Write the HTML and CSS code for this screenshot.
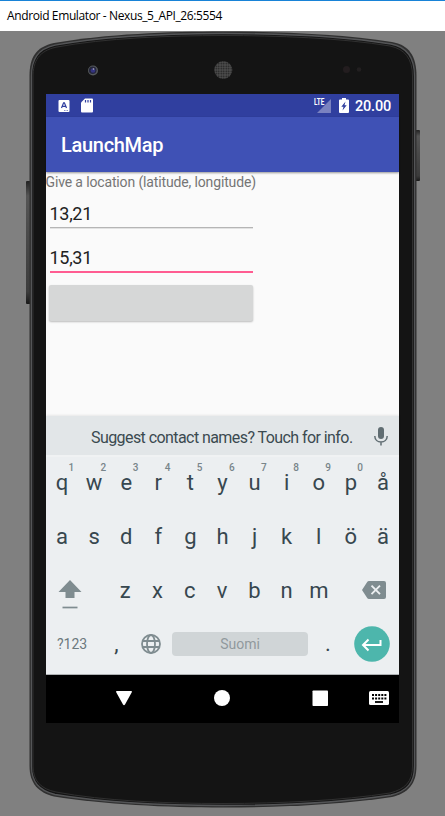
FILE: index.html
```html
<!DOCTYPE html>
<html lang="en">
<head>
<meta charset="utf-8">
<title>Android Emulator - Nexus_5_API_26:5554</title>
<link rel="stylesheet" href="styles.css">
</head>
<body>
<header class="titlebar"><span>Android Emulator - Nexus_5_API_26:5554</span></header>
<main class="device">
  <svg class="shell" width="445" height="785" viewBox="0 31 445 785" aria-hidden="true">
    <defs>
      <linearGradient id="btn" x1="0" y1="0" x2="0" y2="1"><stop offset="0" stop-color="#222"/><stop offset=".12" stop-color="#555"/><stop offset=".5" stop-color="#484848"/><stop offset=".9" stop-color="#3c3c3c"/><stop offset="1" stop-color="#181818"/></linearGradient>
      <pattern id="mesh" width="2.500" height="2.500" patternUnits="userSpaceOnUse"><rect width="2.500" height="2.500" fill="#5c5c5c"/><rect x=".4" y=".4" width="1.700" height="1.700" fill="#1d1d1d"/></pattern>
    </defs>
    <rect x="26" y="181" width="5" height="123" rx="1" fill="url(#btn)"/>
    <rect x="415" y="130" width="5" height="51" rx="1" fill="url(#btn)"/>
    <path d="M29.500 76C29.500 57 36 47 54 43C105 34 170 31.500 223 31.500C276 31.500 342 34 392 42C409 45 416.500 56 416.500 76V766C416.500 784 408 793 392 797C342 804.500 280 807.500 223 807.500C166 807.500 104 804.500 54 796.500C38 792.500 29.500 783 29.500 766Z" fill="#303030"/>
    <path d="M31.500 76C31.500 59 38 49 55 45.200C105 36 170 33.500 223 33.500C276 33.500 342 36 391 44C407 47 414.500 58 414.500 76V766C414.500 783 407 791 391 795C342 802.500 280 805.500 223 805.500C166 805.500 104 802.500 55 794.500C39 790.500 31.500 782 31.500 766Z" fill="#141414" stroke="#545557" stroke-width="1.300"/>
    <path d="M33 77C33 61 39 51 56 47.200C105 38 170 35.500 223 35.500C276 35.500 342 38 390 46C405 49 412.500 59 412.500 76V766C412.500 782 405 789 390 793C342 800.500 280 803.500 223 803.500C166 803.500 104 801 56 792C41 789 33 781 33 766Z" fill="#141414" stroke="#303030"/>
    <circle cx="93" cy="70.500" r="5" fill="#55595b"/><circle cx="92.700" cy="70.300" r="3.800" fill="#25263b"/><circle cx="93" cy="70.500" r="2.300" fill="#343480"/><circle cx="93.500" cy="69" r=".8" fill="#bbb"/>
    <circle cx="223.300" cy="70" r="9" fill="url(#mesh)"/>
    <circle cx="346.500" cy="69.500" r="3.500" fill="#231d1f"/><circle cx="359" cy="69.500" r="2.300" fill="#221f20"/>
  </svg>
  <section class="screen">
    <div class="status">
      <svg width="12" height="14" viewBox="0 0 12 14"><rect x=".5" y="1" width="11" height="12" rx="1" fill="#fff"/><path d="M3.500 9L5.600 3.800H6.400L8.500 9M4.300 7.300H7.700" fill="none" stroke="#303f9f" stroke-width="1.200"/><path d="M6 11.500H10" stroke="#8a92c9" stroke-dasharray="1 .5"/></svg>
      <svg class="sd" width="12" height="15" viewBox="0 0 12 15"><path d="M4 .5H11Q12 .5 12 1.500V13.500Q12 14.500 11 14.500H1Q0 14.500 0 13.500V4.500Z" fill="#fff"/><path d="M4.500 2V4.600M7 2V4.600M9.500 2V4.600" stroke="#303f9f" stroke-width="1.200"/></svg>
      <span class="lte"><span>LTE</span></span>
      <svg class="signal" width="14" height="14" viewBox="0 0 14 14"><path d="M14 0V14H0Z" fill="#7a82c0"/></svg>
      <svg class="battery" width="10" height="15" viewBox="0 0 10 15"><path d="M3 0H7V1.500H9Q10 1.500 10 2.500V14Q10 15 9 15H1Q0 15 0 14V2.500Q0 1.500 1 1.500H3Z" fill="#fff"/><path d="M6.500 3.500L2.300 8.800H4.500L3.500 12.500L7.700 7.300H5.500Z" fill="#303f9f"/></svg>
      <span class="clock">20.00</span>
    </div>
    <div class="appbar"><h1>LaunchMap</h1></div>
    <div class="content">
      <p class="label">Give a location (latitude, longitude)</p>
      <div class="field"><span>13,21</span></div>
      <div class="field focused"><span>15,31</span></div>
      <div class="button"></div>
    </div>
    <div class="suggest">
      <span>Suggest contact names? Touch for info.</span>
      <svg width="14" height="20" viewBox="0 0 14 20"><rect x="4" y="0" width="6" height="12" rx="3" fill="#606d72"/><path d="M.8 9C.8 17 13.200 17 13.200 9M7 15V18.500" fill="none" stroke="#606d72" stroke-width="1.500"/></svg>
    </div>
    <div class="keyboard">
      <div class="row first"><b>q<sup>1</sup></b><b>w<sup>2</sup></b><b>e<sup>3</sup></b><b>r<sup>4</sup></b><b>t<sup>5</sup></b><b>y<sup>6</sup></b><b>u<sup>7</sup></b><b>i<sup>8</sup></b><b>o<sup>9</sup></b><b>p<sup>0</sup></b><b>å</b></div>
      <div class="row"><b>a</b><b>s</b><b>d</b><b>f</b><b>g</b><b>h</b><b>j</b><b>k</b><b>l</b><b>ö</b><b>ä</b></div>
      <div class="row third">
        <svg class="shift" width="24" height="30" viewBox="0 0 24 30"><path d="M12 1L23.500 13H16.500V19H7.500V13H.5Z" fill="#7f8c90"/><path d="M4.500 28.500H19.500" stroke="#7f8c90" stroke-width="1.700"/></svg>
        <b>z</b><b>x</b><b>c</b><b>v</b><b>b</b><b>n</b><b>m</b>
        <svg class="delete" width="24" height="18" viewBox="0 0 24 18"><path d="M7 0H22Q24 0 24 2V16Q24 18 22 18H7Q5.800 18 5.200 17L0 9L5.200 1Q5.800 0 7 0Z" fill="#7f8c90"/><path d="M9.500 4.700L18 13.200M18 4.700L9.500 13.200" stroke="#eceff1" stroke-width="1.900"/></svg>
      </div>
      <div class="row bottom">
        <span class="sym">?123</span><b class="comma">,</b>
        <svg width="20" height="20" viewBox="0 0 20 20" fill="none" stroke="#7f8c90" stroke-width="1.800"><circle cx="10" cy="10" r="9"/><ellipse cx="10" cy="10" rx="4" ry="9"/><path d="M2 7H18M2 13H18"/></svg>
        <span class="space">Suomi</span><b class="dot">.</b>
        <svg class="enter" width="36" height="36" viewBox="0 0 36 36"><circle cx="18" cy="18" r="17.800" fill="#4db6ac"/><path d="M26.500 14V19H10M14.500 13.500L9 19L14.500 24.500" fill="none" stroke="#fff" stroke-width="2"/></svg>
      </div>
    </div>
    <nav class="nav">
      <svg width="353" height="48" viewBox="0 0 353 48" fill="#fff"><path d="M71 16H85Q86.500 16 85.800 17.200L79 29.500Q78 31 77 29.500L70.200 17.200Q69.500 16 71 16Z"/><circle cx="176" cy="23" r="8"/><rect x="266.500" y="15.500" width="15.500" height="15.500" rx=".8"/><rect x="323" y="16" width="20" height="14" rx="1.500"/><path d="M326 20H341M326 23.500H341" stroke="#000" stroke-width="2" stroke-dasharray="2 1.100"/><path d="M329 27H337" stroke="#000" stroke-width="1.800"/></svg>
    </nav>
  </section>
</main>
</body>
</html>
```
FILE: styles.css
```css
* { box-sizing: border-box; }
body { margin: 0; width: 445px; height: 816px; overflow: hidden; background: #808080; font-family: Roboto, sans-serif; }
.titlebar { height: 31px; border-top: 1px solid #1883d7; background: #fff; padding: 7px 0 0 7px; font: 12px/16px "Open Sans", sans-serif; color: #000; white-space: nowrap; letter-spacing: -.38px; }
.device { position: relative; height: 785px; padding: 63px 0 0 46px; }
.shell { position: absolute; left: 0; top: 0; }
.screen { position: relative; width: 353px; height: 629px; display: flex; flex-direction: column; background: #fafafa; }
.status { height: 23px; background: #303f9f; color: #fff; display: flex; align-items: center; padding: 0 8px 0 12px; flex: none; }
.sd { margin-left: 11px; }
.lte { margin-left: auto; font-size: 8.5px; font-weight: 700; line-height: 8px; align-self: flex-start; padding-top: 4px; width: 3px; }
.lte span { display: inline-block; transform: scaleX(.75); transform-origin: left; }
.signal { margin-right: 8px; }
.battery { margin-right: 6px; }
.clock { font-size: 14.5px; font-weight: 500; line-height: 16px; letter-spacing: -.2px; padding-top: 2px; }
.appbar { height: 55px; flex: none; background: #3f51b5; display: flex; align-items: center; padding-left: 15px; color: #fff; box-shadow: 0 1px 2px rgba(0,0,0,.4); z-index: 1; }
h1 { margin: 1px 0 0; font-size: 20px; font-weight: 500; line-height: 24px; letter-spacing: -.3px; }
.content { flex: 1; min-height: 0; }
.label { margin: 2px 0 0 -.5px; font-size: 14px; line-height: 17px; color: #757575; white-space: nowrap; letter-spacing: -.14px; }
.field { width: 203px; height: 30px; margin: 7px 0 0 3.500px; border-bottom: 1px solid #b5b5b5; box-shadow: 0 1px 0 #e2e2e2; font-size: 18px; line-height: 32px; color: #212121; letter-spacing: -.3px; }
.focused { height: 31px; margin-top: 14px; border-bottom: 2px solid #ff5c91; box-shadow: none; line-height: 32px; }
.button { width: 204px; height: 36px; margin: 12px 0 0 3px; border-radius: 2px; background: #d6d7d7; box-shadow: 0 1px 2px rgba(0,0,0,.25); }
.suggest { height: 39px; flex: none; background: #e2e6e8; box-shadow: 0 -1px 2px rgba(0,0,0,.08); color: #3b4a50; display: flex; align-items: center; justify-content: space-between; padding: 4px 11px 0 45px; font-size: 16px; letter-spacing: -.57px; white-space: nowrap; }
.suggest svg { margin-top: -2px; }
.keyboard { height: 220px; flex: none; background: #eceff1; border-top: 2px solid #f0f2f3; border-bottom: 1px solid #aeb1b3; color: #37474f; }
.row { height: 54px; display: grid; grid-template-columns: repeat(11, 1fr); align-items: center; }
.first { margin-top: -1px; }
.row b { font-weight: 400; font-size: 22px; line-height: 54px; text-align: center; position: relative; }
sup { position: absolute; left: 22.5px; top: 7px; font-size: 10px; line-height: 10px; font-weight: 500; color: #78858a; }
.third { grid-template-columns: 63px repeat(7, 32.3px) 1fr; }
.shift { margin: 5px 0 0 12px; }
.delete { margin: -3px 0 0 27px; }
.bottom { height: 52px; grid-template-columns: 52px 43px 31px 136px 40px 1fr; }
.row .comma, .row .dot { line-height: 52px; }
.row .comma { padding-right: 6px; }
.sym { font-size: 14px; color: #6c797e; padding-left: 11px; }
.space { height: 24px; border-radius: 4px; background: #d0d5d7; color: #90999d; text-align: center; font-size: 14px; line-height: 24px; }
.enter { margin-left: 6px; }
.nav { height: 48px; flex: none; background: #000; }
.nav svg { display: block; }
```
